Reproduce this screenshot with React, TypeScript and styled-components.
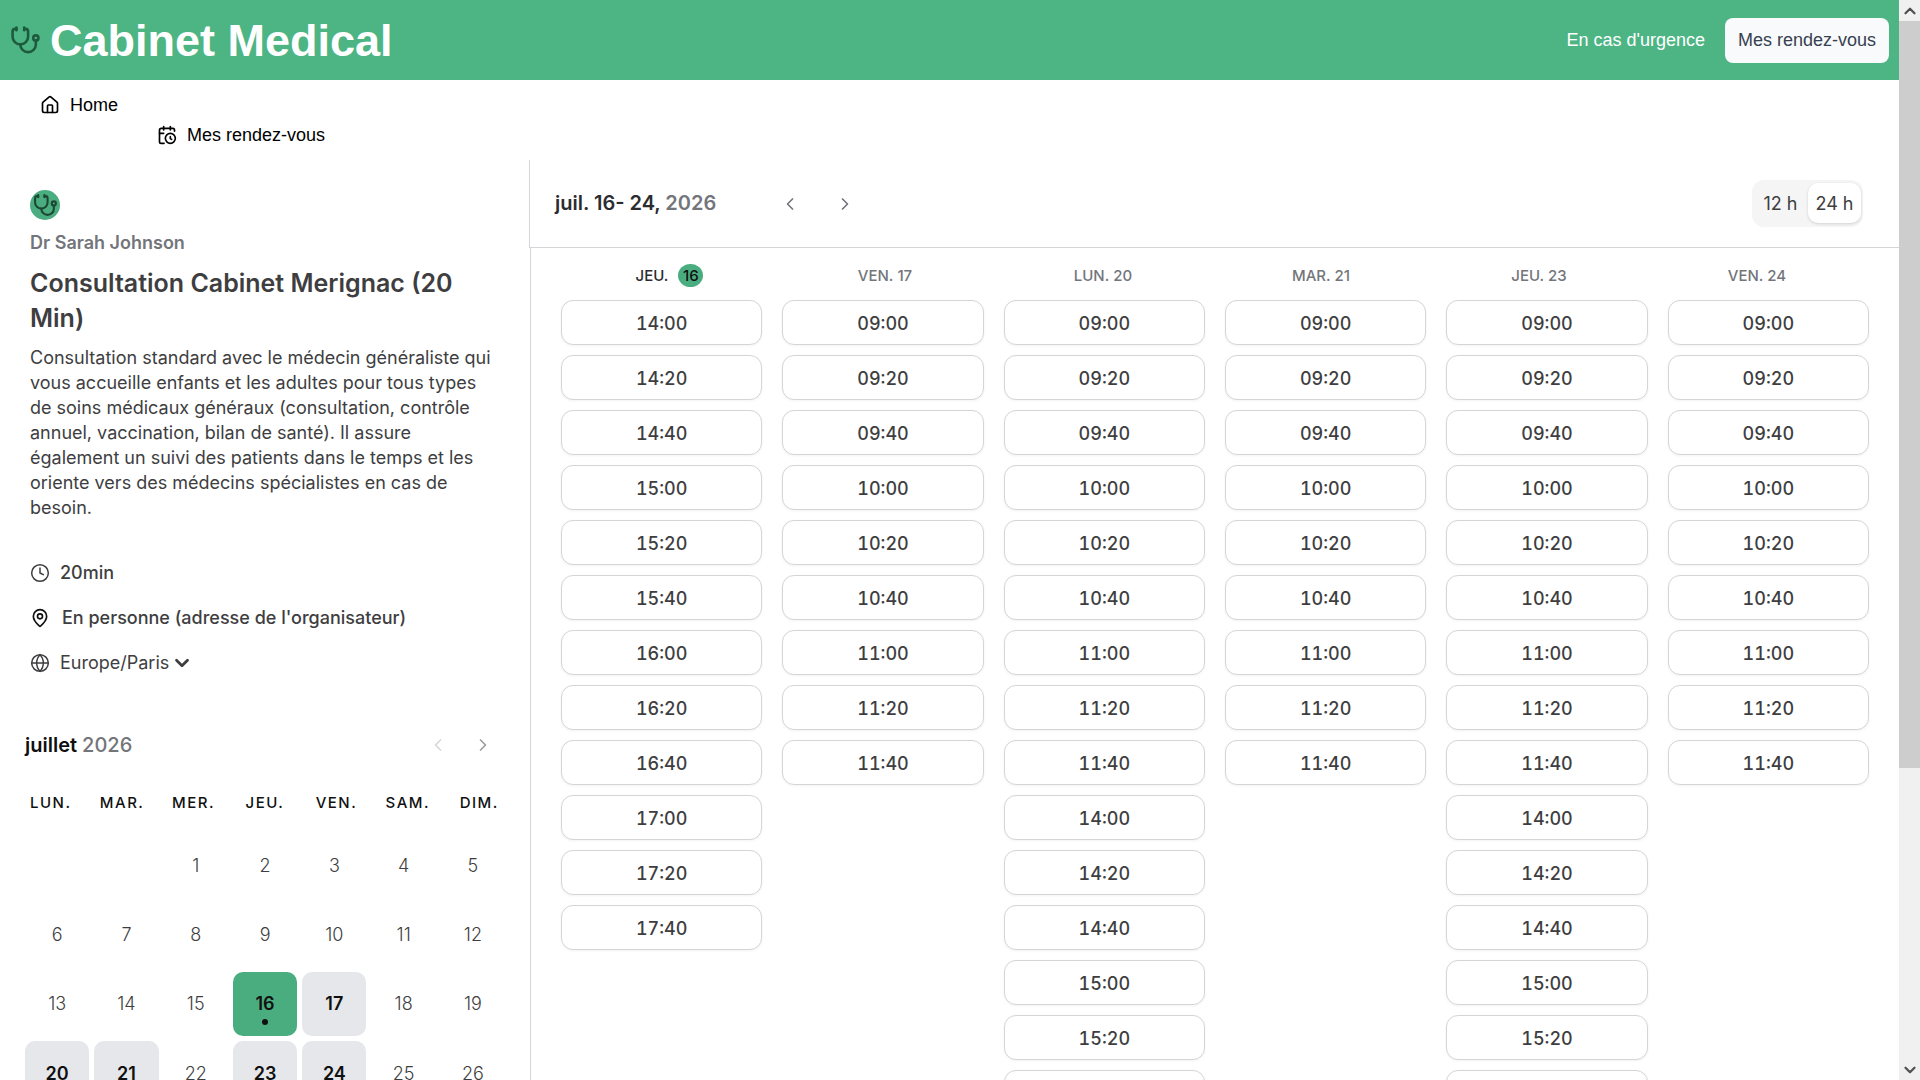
import React, { useState } from "react";
import styled, { createGlobalStyle, css } from "styled-components";
import {
  CalendarClock,
  ChevronDown,
  ChevronLeft,
  ChevronRight,
  ChevronUp,
  Clock,
  Globe,
  House,
  MapPin,
  Stethoscope,
} from "lucide-react";

const color = {
  brand: "#4db584",
  brandDeep: "#4aad7f",
  text: "#101010",
  body: "#3e3e41",
  muted: "#73757b",
  faint: "#9b9ca1",
  line: "#d4d5d8",
  soft: "#e5e7eb",
};

const sans = `"Liberation Sans", Arial, sans-serif`;
const inter = `Inter, "Liberation Sans", sans-serif`;

const GlobalStyle = createGlobalStyle`
  *, *::before, *::after { box-sizing: border-box; }
  body { margin: 0; background: #fff; color: ${color.text}; font-family: ${inter}; font-size: 18px; line-height: 25px; }
  h1, h2, h3, p, ul, dl { margin: 0; padding: 0; }
  ul { list-style: none; }
  button { font: inherit; color: inherit; border: 0; background: none; padding: 0; cursor: pointer; }
  a { color: inherit; text-decoration: none; }
`;

const Shell = styled.div`
  display: grid;
  grid-template-columns: minmax(0, 1fr) 21px;
  height: 100vh;
`;

const Page = styled.div`
  overflow-y: auto;
  scrollbar-width: none;
`;

const ScrollTrack = styled.div`
  display: flex;
  flex-direction: column;
  background: #f0f0f0;
`;

const ScrollArrow = styled.button`
  display: grid;
  place-items: center;
  height: 21px;
  color: #505050;
`;

const ScrollRail = styled.div`
  flex: 1;
`;

const ScrollThumb = styled.div`
  height: 72%;
  background: #cdcdcd;
`;

const TopBar = styled.header`
  display: flex;
  align-items: center;
  justify-content: space-between;
  height: 80px;
  padding: 1px 10px 0;
  background: ${color.brand};
  font-family: ${sans};
`;

const Brand = styled.a`
  display: flex;
  align-items: center;
  gap: 9px;
  color: #fff;

  svg { color: #1d5a3e; }
`;

const BrandName = styled.h1`
  font-size: 45px;
  line-height: 50px;
  font-weight: 700;
`;

const TopActions = styled.div`
  display: flex;
  align-items: center;
  gap: 20px;
`;

const UrgentLink = styled.a`
  color: #fff;
`;

const TopButton = styled.button`
  height: 45px;
  padding: 0 13px;
  border-radius: 8px;
  background: #f9fafb;
  color: #374151;
`;

const Nav = styled.nav`
  padding: 10px 40px;
  font-family: ${sans};
`;

const NavItem = styled.li<{ $indent?: boolean }>`
  display: flex;
  padding-left: ${(p) => (p.$indent ? "117px" : "0")};
`;

const NavLink = styled.a`
  display: flex;
  align-items: center;
  gap: 10px;
  height: 30px;
  color: #000;
`;

const Booker = styled.main`
  display: grid;
  grid-template-columns: 530px minmax(0, 1fr);
`;

const Sidebar = styled.aside`
  padding-top: 30px;
`;

const EventInfo = styled.section`
  padding: 0 30px;
`;

const Avatar = styled.div`
  display: grid;
  place-items: center;
  width: 30px;
  height: 30px;
  border-radius: 50%;
  background: ${color.brandDeep};
  color: #1d4733;
`;

const Host = styled.p`
  margin-top: 10px;
  font-weight: 600;
  color: ${color.muted};
`;

const EventTitle = styled.h2`
  margin: 11px 0 9px;
  font-size: 25px;
  line-height: 35px;
  font-weight: 600;
  color: ${color.body};
`;

const Description = styled.p`
  color: ${color.body};
`;

const Details = styled.ul`
  display: flex;
  flex-direction: column;
  gap: 20px;
  margin-top: 40px;
  color: ${color.body};
`;

const Detail = styled.li<{ $strong?: boolean; $wide?: boolean }>`
  display: flex;
  align-items: center;
  gap: ${(p) => (p.$wide ? "12px" : "10px")};
  height: 25px;
  font-weight: ${(p) => (p.$strong ? 500 : 400)};
`;

const ZoneButton = styled.button`
  display: flex;
  align-items: center;
  gap: 2px;
`;

const MiniCalendar = styled.section`
  margin-top: 45px;
  padding: 0 25px 25px;
`;

const MonthBar = styled.div`
  display: flex;
  align-items: center;
  justify-content: space-between;
  height: 50px;
`;

const MonthTitle = styled.h3`
  font-size: 20px;
  font-weight: 600;
`;

const Year = styled.span<{ $strong?: boolean }>`
  font-weight: ${(p) => (p.$strong ? 600 : 500)};
  color: ${color.muted};
`;

const Pager = styled.div`
  display: flex;
`;

const PagerButton = styled.button<{ $wide?: boolean }>`
  display: grid;
  place-items: center;
  width: ${(p) => (p.$wide ? "55px" : "45px")};
  height: 45px;
  color: ${(p) => (p.$wide ? color.muted : color.faint)};

  &:disabled { color: #d6d6d9; cursor: default; }
`;

const WeekDays = styled.div`
  display: grid;
  grid-template-columns: repeat(7, 1fr);
  margin: 20px -10px 18px;
  font-size: 15px;
  font-weight: 500;
  letter-spacing: 0.1em;
  text-align: center;
`;

const Days = styled.div`
  display: grid;
  grid-template-columns: repeat(7, 1fr);
  gap: 5px;
`;

const available = css`
  background: ${color.soft};
  color: #101010;
  font-weight: 600;
`;

const Day = styled.button<{ $open: boolean; $today: boolean }>`
  position: relative;
  aspect-ratio: 1;
  border-radius: 10px;
  font-weight: 300;
  color: ${color.body};
  ${(p) => p.$open && available}
  ${(p) => p.$today && `background: ${color.brandDeep};`}
`;

const TodayDot = styled.span`
  position: absolute;
  left: 50%;
  bottom: 11px;
  width: 6px;
  height: 6px;
  border-radius: 50%;
  background: #101010;
  transform: translateX(-50%);
`;

const RangeBar = styled.div`
  display: flex;
  align-items: center;
  height: 88px;
  margin-left: -1px;
  padding: 0 36px 0 25px;
  border: solid ${color.line};
  border-width: 0 0 1px 1px;
`;

const RangeTitle = styled.h2`
  width: 207px;
  font-size: 20px;
  font-weight: 600;
  color: #2b2c30;
`;

const FormatToggle = styled.div`
  display: flex;
  gap: 1px;
  height: 47px;
  margin-left: auto;
  padding: 3px 2px 4px;
  border-radius: 12px;
  background: #f5f5f6;
`;

const FormatButton = styled.button<{ $on: boolean }>`
  width: 53px;
  border-radius: 10px;
  color: ${color.body};
  ${(p) => p.$on && "background: #fff; box-shadow: 0 1px 3px rgba(0, 0, 0, 0.15);"}
`;

const Schedule = styled.div`
  padding: 15px 30px 40px;
  border-left: 1px solid ${color.line};
`;

const ColumnHeads = styled.div`
  display: grid;
  grid-template-columns: repeat(6, 1fr);
  margin: 0 3px 12px -3px;
  font-size: 15px;
  font-weight: 500;
  color: ${color.muted};
`;

const ColumnHead = styled.div<{ $today: boolean }>`
  display: flex;
  align-items: center;
  justify-content: center;
  gap: ${(p) => (p.$today ? "10px" : "4px")};
  height: 25px;
  padding-left: ${(p) => (p.$today ? "5px" : "0")};
  color: ${(p) => (p.$today ? "#2b2c30" : "inherit")};
`;

const TodayBadge = styled.span`
  width: 25px;
  border-radius: 50%;
  background: ${color.brandDeep};
  color: #101010;
  line-height: 23px;
  text-align: center;
`;

const SlotColumns = styled.div`
  display: grid;
  grid-template-columns: repeat(6, 1fr);
  gap: 20px;
`;

const SlotList = styled.ul`
  display: flex;
  flex-direction: column;
  gap: 10px;
`;

const Slot = styled.button`
  width: 100%;
  height: 45px;
  padding-top: 1px;
  border: 1px solid ${color.line};
  border-radius: 12px;
  background: #fff;
  box-shadow: 0 1px 3px rgba(0, 0, 0, 0.05);
  color: ${color.body};
  font-weight: 500;
  font-variant-numeric: tabular-nums;
`;

const pad = (n: number) => String(n).padStart(2, "0");

const slotsBetween = (fromHour: number, toHour: number) => {
  const slots: string[] = [];
  for (let m = fromHour * 60; m < toHour * 60; m += 20) {
    slots.push(`${pad(Math.floor(m / 60))}:${pad(m % 60)}`);
  }
  return slots;
};

const morning = slotsBetween(9, 12);
const afternoon = slotsBetween(14, 18);

const columns = [
  { name: "JEU.", day: 16, slots: afternoon },
  { name: "VEN.", day: 17, slots: morning },
  { name: "LUN.", day: 20, slots: [...morning, ...afternoon] },
  { name: "MAR.", day: 21, slots: morning },
  { name: "JEU.", day: 23, slots: [...morning, ...afternoon] },
  { name: "VEN.", day: 24, slots: morning },
];

const today = 16;
const weekDays = ["LUN.", "MAR.", "MER.", "JEU.", "VEN.", "SAM.", "DIM."];
const openDays = [16, 17, 20, 21, 23, 24, 27, 28, 30, 31];
const monthDays = Array.from({ length: 31 }, (_, i) => i + 1);

const toTwelve = (time: string) => {
  const [h, m] = time.split(":");
  const hour = Number(h);
  return `${hour % 12 || 12}:${m}${hour < 12 ? "am" : "pm"}`;
};

export default function App() {
  const [is24, setIs24] = useState(true);

  return (
    <>
      <GlobalStyle />
      <Shell>
        <Page>
          <TopBar>
            <Brand href="#">
              <Stethoscope size={31} strokeWidth={2} />
              <BrandName>Cabinet Medical</BrandName>
            </Brand>
            <TopActions>
              <UrgentLink href="#urgence">En cas d'urgence</UrgentLink>
              <TopButton type="button">Mes rendez-vous</TopButton>
            </TopActions>
          </TopBar>

          <Nav>
            <ul>
              <NavItem>
                <NavLink href="#home">
                  <House size={20} />
                  Home
                </NavLink>
              </NavItem>
              <NavItem $indent>
                <NavLink href="#rendez-vous">
                  <CalendarClock size={20} />
                  Mes rendez-vous
                </NavLink>
              </NavItem>
            </ul>
          </Nav>

          <Booker>
            <Sidebar>
              <EventInfo>
                <Avatar>
                  <Stethoscope size={25} strokeWidth={2} />
                </Avatar>
                <Host>Dr Sarah Johnson</Host>
                <EventTitle>Consultation Cabinet Merignac (20 Min)</EventTitle>
                <Description>
                  Consultation standard avec le médecin généraliste qui vous accueille enfants et
                  les adultes pour tous types de soins médicaux généraux (consultation, contrôle
                  annuel, vaccination, bilan de santé). Il assure également un suivi des patients
                  dans le temps et les oriente vers des médecins spécialistes en cas de besoin.
                </Description>
                <Details>
                  <Detail $strong>
                    <Clock size={20} strokeWidth={1.8} />
                    20min
                  </Detail>
                  <Detail $strong $wide>
                    <MapPin size={20} color="#101010" />
                    En personne (adresse de l'organisateur)
                  </Detail>
                  <Detail>
                    <Globe size={20} strokeWidth={1.8} />
                    <ZoneButton type="button">
                      Europe/Paris
                      <ChevronDown size={22} strokeWidth={3} />
                    </ZoneButton>
                  </Detail>
                </Details>
              </EventInfo>

              <MiniCalendar>
                <MonthBar>
                  <MonthTitle>
                    juillet <Year>2026</Year>
                  </MonthTitle>
                  <Pager>
                    <PagerButton type="button" aria-label="Mois précédent" disabled>
                      <ChevronLeft size={20} />
                    </PagerButton>
                    <PagerButton type="button" aria-label="Mois suivant">
                      <ChevronRight size={20} />
                    </PagerButton>
                  </Pager>
                </MonthBar>
                <WeekDays>
                  {weekDays.map((d) => (
                    <span key={d}>{d}</span>
                  ))}
                </WeekDays>
                <Days>
                  <span />
                  <span />
                  {monthDays.map((d) => (
                    <Day key={d} type="button" $open={openDays.includes(d)} $today={d === today}>
                      {d}
                      {d === today && <TodayDot />}
                    </Day>
                  ))}
                </Days>
              </MiniCalendar>
            </Sidebar>

            <section>
              <RangeBar>
                <RangeTitle>
                  juil. 16- 24, <Year $strong>2026</Year>
                </RangeTitle>
                <Pager>
                  <PagerButton type="button" $wide aria-label="Jours précédents">
                    <ChevronLeft size={20} />
                  </PagerButton>
                  <PagerButton type="button" $wide aria-label="Jours suivants">
                    <ChevronRight size={20} />
                  </PagerButton>
                </Pager>
                <FormatToggle>
                  <FormatButton type="button" $on={!is24} onClick={() => setIs24(false)}>
                    12 h
                  </FormatButton>
                  <FormatButton type="button" $on={is24} onClick={() => setIs24(true)}>
                    24 h
                  </FormatButton>
                </FormatToggle>
              </RangeBar>

              <Schedule>
                <ColumnHeads>
                  {columns.map((c) => (
                    <ColumnHead key={c.day} $today={c.day === today}>
                      <span>{c.name}</span>
                      {c.day === today ? <TodayBadge>{c.day}</TodayBadge> : <span>{c.day}</span>}
                    </ColumnHead>
                  ))}
                </ColumnHeads>
                <SlotColumns>
                  {columns.map((c) => (
                    <SlotList key={c.day}>
                      {c.slots.map((s) => (
                        <li key={s}>
                          <Slot type="button">{is24 ? s : toTwelve(s)}</Slot>
                        </li>
                      ))}
                    </SlotList>
                  ))}
                </SlotColumns>
              </Schedule>
            </section>
          </Booker>
        </Page>

        <ScrollTrack aria-hidden="true">
          <ScrollArrow type="button" tabIndex={-1}>
            <ChevronUp size={18} strokeWidth={3} />
          </ScrollArrow>
          <ScrollRail>
            <ScrollThumb />
          </ScrollRail>
          <ScrollArrow type="button" tabIndex={-1}>
            <ChevronDown size={18} strokeWidth={3} />
          </ScrollArrow>
        </ScrollTrack>
      </Shell>
    </>
  );
}
